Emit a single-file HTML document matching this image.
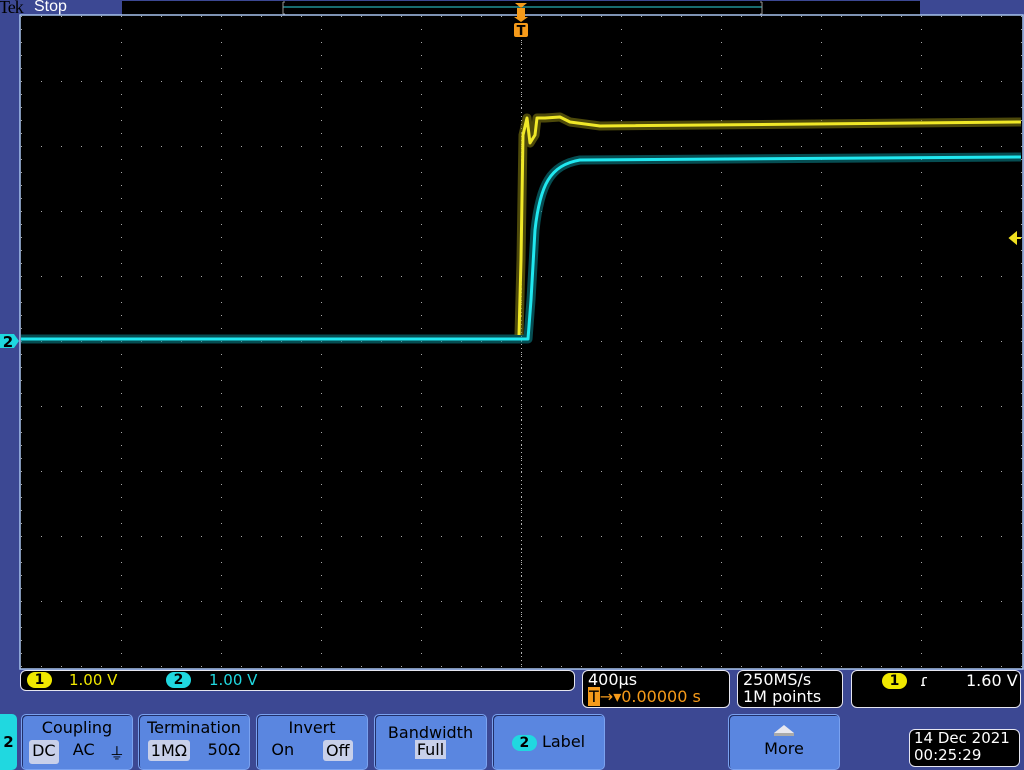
<!DOCTYPE html>
<html><head><meta charset="utf-8"><style>
*{margin:0;padding:0;box-sizing:border-box}
body{width:1024px;height:768px;background:#3c4893;position:relative;overflow:hidden;font-family:"DejaVu Sans","Liberation Sans",sans-serif}
.abs{position:absolute}
.box{position:absolute;background:#000;border:1px solid #e6e6f0;border-radius:6px;color:#fff;font-size:16px}
.btn{position:absolute;top:714px;height:56px;background:#5a86e0;border:1px solid #7aa2f0;border-radius:5px;box-shadow:1px 1px 0 #22306a inset;color:#000;font-size:16px;text-align:center}
.sel{background:#c8d0ea;border-radius:3px;padding:1px 3px}
.pill{display:inline-block;border-radius:9px;font-size:14px;font-weight:bold;line-height:16px;width:25px;text-align:center;color:#000}
</style></head><body>
<div class="abs" style="left:-1px;top:-3px;font-size:18px;font-family:'Liberation Serif',serif;color:#000;letter-spacing:-1px">Tek</div>
<div class="abs" style="left:34px;top:-2px;font-size:16px;color:#fff;font-family:'Liberation Sans',sans-serif">Stop</div>
<div class="abs" style="left:122px;top:1px;width:798px;height:14px;background:#000"></div>
<svg class="abs" style="left:0;top:0" width="1024" height="768">
<line x1="283" y1="7" x2="762" y2="7" stroke="#30d8e0" stroke-width="1"/>
<path d="M283,2 v12 M283,2h2 M283,14h2 M762,2 v12 M762,2h-2 M762,14h-2" stroke="#999" fill="none"/>
<rect x="20" y="15" width="1003" height="654" fill="#000" stroke="#a8c4f0" stroke-width="1.5"/>
<defs>
<pattern id="hd" x="21" y="16" width="20" height="65" patternUnits="userSpaceOnUse"><rect x="0" y="0" width="1" height="1" fill="#aaa"/></pattern>
<pattern id="vd" x="21" y="16" width="100" height="13" patternUnits="userSpaceOnUse"><rect x="0" y="0" width="1" height="1" fill="#aaa"/></pattern>
<pattern id="ct" x="21" y="16" width="4" height="4" patternUnits="userSpaceOnUse"><rect x="0" y="0" width="1" height="1" fill="#bbb"/></pattern>
</defs>
<rect x="21" y="16" width="1001" height="652" fill="url(#hd)"/>
<rect x="21" y="16" width="1001" height="652" fill="url(#vd)"/>
<rect x="521" y="16" width="1" height="652" fill="url(#ct)"/>
<rect x="21" y="341" width="1001" height="1" fill="url(#ct)"/>
<g fill="none" stroke-linejoin="round">
<path d="M21,339 H528 L531,300 L535,230 C540,185 550,165 580,160 L1021,157" stroke="#0a8088" stroke-width="9" opacity="0.6"/>
<path d="M21,339 H528 L531,300 L535,230 C540,185 550,165 580,160 L1021,157" stroke="#20e8f0" stroke-width="3"/>
<path d="M519,335 L521,260 L523,135 L527,118 L530,143 L535,135 L537,118 L545,118 L560,117 L570,122 L600,126 L1021,122" stroke="#807a10" stroke-width="9" opacity="0.6"/>
<path d="M519,335 L521,260 L523,135 L527,118 L530,143 L535,135 L537,118 L545,118 L560,117 L570,122 L600,126 L1021,122" stroke="#f0e828" stroke-width="3"/>
</g>
<path d="M515,3 h12 l-6,5z" fill="#f59a1a"/>
<rect x="517" y="8" width="8" height="9" fill="#f59a1a"/>
<path d="M514,17 h14 l-7,5z" fill="#f59a1a"/>
<rect x="514" y="23" width="14" height="14" rx="2" fill="#f59a1a"/>
<text x="521" y="35" font-size="13" font-weight="bold" text-anchor="middle" fill="#000" font-family="DejaVu Sans">T</text>
<path d="M0,334 h14 l5,7 l-5,7 h-14z" fill="#1ed8e0"/>
<text x="8" y="347" font-size="15" font-weight="bold" text-anchor="middle" fill="#000" font-family="DejaVu Sans">2</text>
<path d="M1010,238 l6,-5 v10z M1015,238 h6" fill="#f0e020" stroke="#f0e020" stroke-width="2"/>
</svg>
<div class="box" style="left:20px;top:670px;width:555px;height:21px;font-size:15px">
<span class="abs pill" style="left:6px;top:1px;background:#f0e800">1</span>
<span class="abs" style="left:48px;top:0px;color:#f0e800">1.00 V</span>
<span class="abs pill" style="left:145px;top:1px;background:#20d8e0">2</span>
<span class="abs" style="left:188px;top:0px;color:#20d8e0">1.00 V</span>
</div>
<div class="box" style="left:582px;top:670px;width:148px;height:38px;line-height:17px;padding-left:5px">400µs<br><span style="color:#f59a1a"><span style="background:#f59a1a;color:#000;padding:0 1px">T</span>→▾0.00000 s</span></div>
<div class="box" style="left:737px;top:670px;width:106px;height:38px;line-height:17px;padding-left:5px">250MS/s<br>1M points</div>
<div class="box" style="left:851px;top:670px;width:170px;height:38px">
<span class="abs pill" style="left:30px;top:2px;background:#f0e800">1</span>
<span class="abs" style="left:68px;top:0px">ɾ</span>
<span class="abs" style="left:114px;top:0px">1.60 V</span></div>
<div class="abs" style="left:0;top:714px;width:17px;height:56px;background:#20d8e0;border-radius:0 5px 5px 0;font-weight:bold;font-size:15px;line-height:56px;text-align:center">2</div>
<div class="btn" style="left:21px;width:112px"><div style="margin-top:3px">Coupling</div><div style="margin-top:3px;display:flex;justify-content:space-around"><span class="sel">DC</span><span>AC</span><span>⏚</span></div></div>
<div class="btn" style="left:138px;width:112px"><div style="margin-top:3px">Termination</div><div style="margin-top:3px;display:flex;justify-content:space-around"><span class="sel">1MΩ</span><span>50Ω</span></div></div>
<div class="btn" style="left:256px;width:112px"><div style="margin-top:3px">Invert</div><div style="margin-top:3px;display:flex;justify-content:space-around"><span>On</span><span class="sel">Off</span></div></div>
<div class="btn" style="left:374px;width:113px;line-height:17px;padding-top:9px">Bandwidth<br><span style="background:#c8d0ea;padding:0 2px">Full</span></div>
<div class="btn" style="left:492px;width:113px;line-height:54px"><span class="pill" style="background:#20d8e0">2</span> Label</div>
<div class="btn" style="left:728px;width:112px"><svg width="24" height="12" style="margin-top:10px"><path d="M12,0 L22,8 H2z" fill="#e8e8f0"/><rect x="2" y="8" width="20" height="3" fill="#aaa"/></svg><div style="line-height:16px">More</div></div>
<div class="box" style="left:909px;top:729px;width:111px;height:38px;line-height:17px;padding-left:4px;font-size:15px">14 Dec 2021<br>00:25:29</div>
</body></html>
